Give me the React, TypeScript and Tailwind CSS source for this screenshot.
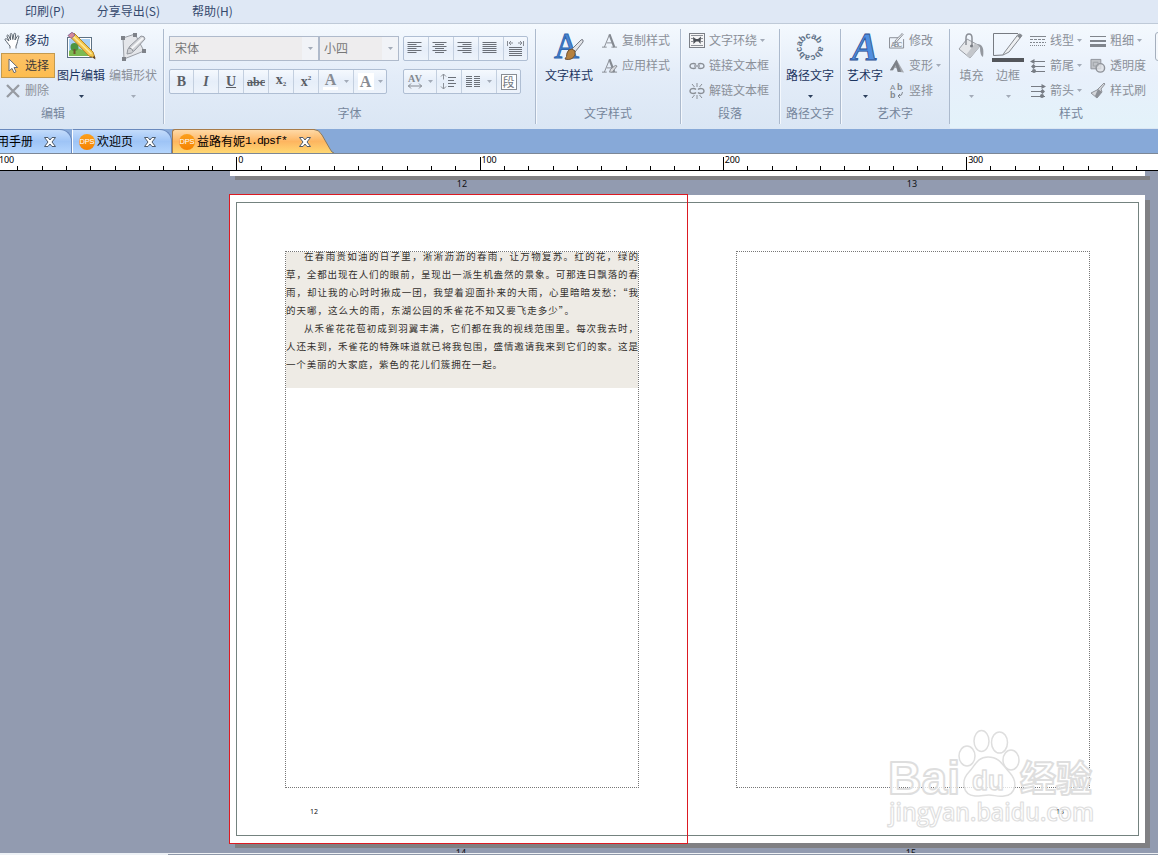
import type { ReactNode } from 'react';
import clsx from 'clsx';

const INK = '#6b7078';

function Caret({ dark = false }: { dark?: boolean }) {
  return (
    <svg width="5" height="3" viewBox="0 0 5 3" className="shrink-0">
      <path d="M0 0h5L2.5 3z" fill={dark ? '#2c3f5c' : '#a3abb8'} />
    </svg>
  );
}

function Group({ label, className, labelClass, children }: { label: string; className: string; labelClass?: string; children: ReactNode }) {
  return (
    <div className={clsx('flex flex-col shrink-0 h-[104px] pt-1', className)}>
      <div className="flex h-[75px]">{children}</div>
      <div className={clsx('h-[20px] leading-[20px] text-[#76869c]', labelClass ?? 'text-center')}>{label}</div>
    </div>
  );
}

function Divider() {
  return <div className="w-[2px] -mr-px shrink-0 h-[95px] mt-[5px] bg-[#acbacd] border-r border-[#f4f8fd]" />;
}

function BigButton({ icon, label, className, dark = false, caret = true }: { icon: ReactNode; label: string; className: string; dark?: boolean; caret?: boolean }) {
  return (
    <div className={clsx('flex flex-col items-center shrink-0', className)}>
      <div className="h-[38px] flex items-center justify-center">{icon}</div>
      <div className={clsx('h-[18px] leading-[18px] whitespace-nowrap', dark ? 'text-[#1c3560]' : 'text-[#8b9099]')}>{label}</div>
      {caret && <div className="mt-[11px] flex"><Caret dark={dark} /></div>}
    </div>
  );
}

function SmallButton({ icon, label, caret = false }: { icon: ReactNode; label: string; caret?: boolean }) {
  return (
    <div className="h-[25px] flex items-center gap-1 text-[#8b9099] whitespace-nowrap">
      <span className="w-4 h-4 flex items-center justify-center shrink-0">{icon}</span>
      <span className="pb-[2px]">{label}</span>
      {caret && <span className="-ml-px flex"><Caret /></span>}
    </div>
  );
}

/* ---------- icons ---------- */

function HandIcon() {
  return (
    <svg width="18" height="18" viewBox="0 0 18 18" fill="#fff" stroke="#5b6570" strokeWidth="1" strokeLinejoin="round">
      <path d="M6 16.500v-2.500C4.500 12.500 2.500 9.500 1.200 8c-.6-1 .6-1.800 1.500-1L5 9 3 4.200c-.4-1.200 1.100-1.700 1.600-.6L6.600 8 6.300 2.400c0-1.200 1.600-1.200 1.700 0L8.800 7.500 9.900 2c.3-1.200 1.800-.9 1.700.3L11 8l2.300-3.800c.7-1 1.900-.3 1.500.8-1.300 2.800-1.300 6.500-2.800 9v2.500" />
    </svg>
  );
}

function CursorIcon() {
  return (
    <svg width="16" height="16" viewBox="0 0 16 16">
      <path d="M4 1v12l3-2.600 2 4.300 2-1-2-4.200h3.700z" fill="#fff" stroke="#666c78" />
    </svg>
  );
}

function DeleteIcon() {
  return (
    <svg width="14" height="14" viewBox="0 0 14 14">
      <path d="M1 1l12 12M13 1L1 13" stroke="#979ba2" strokeWidth="2.300" />
    </svg>
  );
}

function PictureEditIcon() {
  return (
    <svg width="30" height="30" viewBox="0 0 30 30">
      <rect x="1.500" y="5.500" width="24" height="20" fill="#fff" stroke="#5d7183" />
      <rect x="3" y="7" width="21" height="17" fill="#a9d0f3" />
      <path d="M3 19q5-5 11-2t10-1v8H3z" fill="#7dba52" />
      <circle cx="8.500" cy="15" r="4" fill="#4b9540" />
      <path d="M7.500 17h2v5h-2z" fill="#71552c" />
      <path d="M4 4.500l4-3.500L27 20l2 6-6-2z" fill="#f3c74c" stroke="#b4852b" />
      <path d="M7 4L25.500 22" stroke="#fce99c" strokeWidth="1.500" />
      <path d="M2 3.500l4-3.200 3 2.700-4 3.500z" fill="#d78a9b" stroke="#8a6a95" />
      <path d="M26.500 25.500l3 2-1-4z" fill="#5f4429" />
    </svg>
  );
}

function ShapeEditIcon() {
  return (
    <svg width="28" height="30" viewBox="0 0 28 30">
      <path d="M4 6L16 2l9 17L5 27z" fill="#e4e6ea" stroke="#9a9ea5" />
      <path d="M22 4q4 0 4 3L16 18q-3 4-8 4 0-5 3-8z" fill="#cfd1d5" stroke="#93979e" />
      <path d="M24 6L12 17" stroke="#f5f6f8" strokeWidth="2" />
      <path d="M10 16q3 0 4 3" stroke="#868a91" fill="none" />
      <path d="M2 4h4v4H2zM14 1h4v4h-4zM23 17h4v4h-4zM3 25h4v4H3z" fill="#7e8289" />
    </svg>
  );
}

function AlignIcon({ kind }: { kind: 'left' | 'center' | 'right' | 'full' }) {
  return (
    <svg width="15" height="12" viewBox="0 0 15 12" stroke={INK} strokeWidth="1" className="-ml-[3px] -mt-px">
      {[0, 1, 2, 3, 4, 5].map((i) => {
        const w = kind === 'full' || i % 2 === 0 ? 14 : 9;
        const x = kind === 'right' ? 14.5 - w : kind === 'center' ? 7.5 - w / 2 : 0.5;
        return <path key={i} d={`M${x} ${i * 2 + 0.5}h${w}`} />;
      })}
    </svg>
  );
}

function DistributeIcon() {
  return (
    <svg width="17" height="17" viewBox="0 0 17 17" stroke={INK} fill="none">
      <path d="M.5 1v5M16.500 1v5M2 3h4M11 3h4M4 1L2 3l2 2M13 1l2 2-2 2" stroke="#868b93" />
      <path d="M2 7.500h13M2 9.500h13M2 11.500h13M2 13.500h13M2 15.500h13" />
    </svg>
  );
}

function KerningIcon() {
  return (
    <svg width="18" height="17" viewBox="0 0 18 17" className="overflow-visible">
      <text x="1" y="8.500" fontSize="10" fontWeight="bold" fontFamily="Liberation Serif" textLength="14" fill="#83888f">AV</text>
      <path d="M1 13h14M4 10.500L1.500 13 4 15.500M12 10.500l2.500 2.500-2.500 2.500" stroke="#858a92" fill="none" />
    </svg>
  );
}

function LineSpacingIcon() {
  return (
    <svg width="17" height="17" viewBox="0 0 17 17" stroke={INK} fill="none" className="-ml-[2px]">
      <path d="M3.500 1v5.500M1 3.500L3.500 1 6 3.500M3.500 10v6M1 13.500L3.500 16 6 13.500" stroke="#8c9199" />
      <path d="M8 4.500h8M8 7.500h6M8 10.500h8M8 13.500h6" />
    </svg>
  );
}

function ColumnsIcon() {
  return (
    <svg width="14" height="12" viewBox="0 0 14 12" stroke={INK}>
      {[0, 2, 4, 6, 8, 10].map((y) => (
        <path key={y} d={`M0 ${y + 0.5}h6M8 ${y + 0.5}h6`} />
      ))}
    </svg>
  );
}

function TextStyleIcon() {
  return (
    <svg width="32" height="32" viewBox="0 0 32 32" className="overflow-visible">
      <text x="1" y="27" fontSize="36" fontFamily="Liberation Serif" fill="#4b86d2" stroke="#2f66b0" strokeWidth="1" textLength="25" lengthAdjust="spacingAndGlyphs">A</text>
      <path d="M30 9q-1-1-2 0l-9 9 3 3 8-10z" fill="#e2e4e8" stroke="#777b84" />
      <path d="M22 20l-3-2q-4 0-5 4 0 4-2 6 7 2 10-4z" fill="#b5823f" stroke="#6f5234" />
    </svg>
  );
}

function ArtTextIcon() {
  return (
    <svg width="32" height="32" viewBox="0 0 32 32" className="overflow-visible">
      <text x="3" y="29" fontSize="40" fontWeight="bold" fontStyle="italic" fontFamily="Liberation Serif" fill="#4f8ee0" stroke="#2d4f8f" strokeWidth=".8" textLength="26" lengthAdjust="spacingAndGlyphs">A</text>
    </svg>
  );
}

function CopyStyleIcon({ brush = false }: { brush?: boolean }) {
  return (
    <svg width="17" height="16" viewBox="0 0 17 16" fill="none" stroke="#858a91">
      <path d="M0 14.500h5M10 14.500h6M2.500 14.500L8 1M5 10h6" />
      <path d="M8 1l5 13.500" strokeWidth="2.300" />
      {brush && <path d="M16 8l-5 6.500H8l1-3 5-4z" fill="#d9dbdf" />}
    </svg>
  );
}

function WrapIcon() {
  return (
    <svg width="16" height="15" viewBox="0 0 16 15">
      <rect x=".5" y=".5" width="15" height="14" fill="#f5f5f6" stroke="#7b7f86" />
      <path d="M2 2.500h12M2 12.500h12M2 5.500h2M2 8.500h2M12 5.500h2M12 8.500h2" stroke="#8d9198" />
      <path d="M4 4l3 2h2l3-2.500L11.500 11l-2-2.500H7L4.500 11z" fill="#4c5057" />
    </svg>
  );
}

function LinkIcon({ broken = false }: { broken?: boolean }) {
  return (
    <svg width="16" height="16" viewBox="0 0 16 16" fill="none" stroke="#8a8f96" strokeWidth="1.300">
      <path d="M7 6.500C5.500 5 1 5 1 8s4.500 3 6 1.500M9 6.500C10.500 5 15 5 15 8s-4.500 3-6 1.500" />
      {broken ? <path d="M8 0v4M8 12v4M3 1l2.500 3M13 1l-2.500 3M3 15l2.500-3M13 15l-2.500-3" strokeWidth="1" /> : <path d="M5 8h6" />}
    </svg>
  );
}

function PathTextIcon() {
  const letters = 'abcabcabcab'.split('');
  return (
    <svg width="32" height="32" viewBox="0 0 32 32" className="overflow-visible">
      {letters.map((ch, i) => (
        <text key={i} x="16" y="7.500" textAnchor="middle" fontSize="9" fontWeight="bold" fontFamily="Liberation Sans" fill="#5d7086" transform={`rotate(${i * 31 + 102} 16 16)`}>{ch}</text>
      ))}
    </svg>
  );
}

function ModifyIcon() {
  return (
    <svg width="17" height="16" viewBox="0 0 17 16" fill="none" stroke="#858a91">
      <path d="M11 4.500H.5v11h15V6" />
      <text x="2" y="14" fontSize="7" stroke="none" fill="#777c84" fontFamily="Liberation Sans" textLength="12">ABC</text>
      <path d="M15 1L8 9l-2 1 1-3 7-7z" fill="#eceef0" />
    </svg>
  );
}

function TransformIcon() {
  return (
    <svg width="17" height="16" viewBox="0 0 17 16">
      <path d="M8 1L1 12.500h3.500L6 10h2l1 4 7 1z" fill="#a7abb1" />
      <path d="M8 1L1 12.500h3L7 7l2.500 7.500L13 14z" fill="#7d8188" />
    </svg>
  );
}

function VerticalTextIcon() {
  return (
    <svg width="16" height="17" viewBox="0 0 16 17" fontFamily="Liberation Sans" fill="#83888f" className="overflow-visible">
      <text x="1" y="7.500" fontSize="8">A</text>
      <text x="8" y="7.500" fontSize="9" fontWeight="bold">b</text>
      <text x="1" y="16" fontSize="9" fontWeight="bold">b</text>
      <path d="M13.500 10q0 4-4 4M11 12l-2 2 2 2" fill="none" stroke="#83888f" />
    </svg>
  );
}

function FillIcon() {
  return (
    <svg width="27" height="28" viewBox="0 0 27 28">
      <path d="M9 6L22 13 12 25 1 16z" fill="#e5e7ea" stroke="#999da4" />
      <path d="M22 13L12 25l-4-3L17 10.500z" fill="#c3c6cb" />
      <path d="M19 11q8 0 6 13-3-1-3-10z" fill="#94989f" />
      <path d="M8 12V5q0-4 3-4t3 4v8" fill="none" stroke="#8a8e95" strokeWidth="1.500" />
      <circle cx="13.500" cy="13" r="1.500" fill="#777b82" />
    </svg>
  );
}

function BorderIcon() {
  return (
    <svg width="32" height="30" viewBox="0 0 32 30">
      <path d="M26 1.500H1.500v22L11 23" fill="none" stroke="#777b82" />
      <path d="M12 21L26 2.500q2-1.500 4 1L17 20l-6 3z" fill="#eef0f2" stroke="#85898f" />
      <path d="M25 4l3 2.500 2-3-2-1.500z" fill="#85898f" />
      <rect y="26" width="32" height="4" fill="#53565b" />
    </svg>
  );
}

function DashIcon() {
  return (
    <svg width="16" height="12" viewBox="0 0 16 12" stroke="#83888f">
      <path d="M0 1.500h16" />
      <path d="M0 4.500h16" strokeDasharray="3 1" />
      <path d="M0 7.500h16" strokeDasharray="2 1" />
      <path d="M0 10.500h16" strokeDasharray="1 1" />
    </svg>
  );
}

function ArrowIcon({ flip = false }: { flip?: boolean }) {
  return (
    <svg width="16" height="14" viewBox="0 0 16 14" stroke="#777c84" fill="#777c84" className={flip ? '-scale-x-100' : ''}>
      <path d="M1 2.500h14M3 7.500h12M1 12.500h14" />
      <path d="M4.500 0v5L0 2.500zM3.500 5L6 7.500 3.500 10 1 7.500z" stroke="none" />
      <circle cx="4" cy="12" r="2" stroke="none" />
    </svg>
  );
}

function WeightIcon() {
  return (
    <svg width="16" height="12" viewBox="0 0 16 12" fill="#80858c">
      <path d="M0 1h16v1H0zM0 5h16v2H0zM0 9h16v3H0z" />
    </svg>
  );
}

function OpacityIcon() {
  return (
    <svg width="17" height="16" viewBox="0 0 17 16">
      <path d="M1 1h10.500v10H1z" fill="#c0c3c8" stroke="#8f939a" />
      <circle cx="11" cy="10" r="4.500" fill="#dfe1e5" fillOpacity=".8" stroke="#8f939a" strokeWidth="1.500" />
      <path d="M3.500 4h5v4h-5z" fill="none" stroke="#9ea2a8" />
    </svg>
  );
}

function PainterIcon() {
  return (
    <svg width="16" height="16" viewBox="0 0 16 16">
      <path d="M15 1l-4 5 1 3-5 6-6-5 6-3 2-2 5-5z" fill="#d4d6da" stroke="#90949b" />
      <path d="M8 6l4 3-5 6-2-2z" fill="#8c9097" />
    </svg>
  );
}

function CloseIcon() {
  return (
    <svg width="12" height="10" viewBox="0 0 12 10">
      <path d="M.5.5h3.500L6 3 8 .5h3.500L8 5l3.500 4.500H8L6 7 4 9.500H.5L4 5z" fill="#fff" stroke="#4d5a6b" />
    </svg>
  );
}

function DpsIcon() {
  return (
    <span className="size-[16px] rounded-full bg-linear-to-b from-[#fba01c] to-[#f58200] flex items-center justify-center text-[7.500px] tracking-[-0.200px] leading-none text-white font-['Liberation_Sans'] shrink-0">DPS</span>
  );
}

/* ---------- ribbon ---------- */

const cell = 'h-full flex items-center justify-center border-r border-[#c3cfdf] last:border-r-0';
const box = 'flex h-[25px] border border-[#afbed3] rounded-[2px] bg-linear-to-b from-[#f5f9fe] via-[#e6eef9] to-[#edf3fb] shrink-0';

function FontGroup() {
  return (
    <Group label="字体" className="w-[371px]">
      <div className="flex flex-col pl-[5px] pt-2 w-full">
        <div className="flex">
          <div className="flex w-[150px] h-[25px] border border-[#afbacb] bg-[#eeedee] text-[#777]">
            <span className="flex-1 leading-[21px] pl-[5px]">宋体</span>
            <span className="w-4 flex items-center justify-center bg-[#f1f3f7]"><Caret /></span>
          </div>
          <div className="flex w-[80px] h-[25px] border border-[#afbacb] bg-[#eeedee] text-[#777]">
            <span className="flex-1 leading-[21px] pl-[4px]">小四</span>
            <span className="w-4 flex items-center justify-center bg-[#f1f3f7]"><Caret /></span>
          </div>
          <div className={clsx(box, 'w-[125px] ml-1')}>
            <span className={clsx(cell, 'w-[25px]')}><AlignIcon kind="left" /></span>
            <span className={clsx(cell, 'w-[25px]')}><AlignIcon kind="center" /></span>
            <span className={clsx(cell, 'w-[25px]')}><AlignIcon kind="right" /></span>
            <span className={clsx(cell, 'w-[25px]')}><AlignIcon kind="full" /></span>
            <span className={clsx(cell, 'flex-1')}><DistributeIcon /></span>
          </div>
        </div>
        <div className="flex mt-2">
          <div className={clsx(box, "w-[218px] font-['Liberation_Serif'] font-bold text-[14px] text-[#5a5e66]")}>
            <span className={clsx(cell, 'w-[24px]')}>B</span>
            <span className={clsx(cell, 'w-[25px] italic')}>I</span>
            <span className={clsx(cell, 'w-[25px] underline')}>U</span>
            <span className={clsx(cell, 'w-[25px] text-[12px] line-through')}>abc</span>
            <span className={clsx(cell, 'w-[25px]')}><span className="-mt-1">x</span><span className="text-[7px] mt-1.5">2</span></span>
            <span className={clsx(cell, 'w-[25px]')}><span>x</span><span className="text-[7px] mb-1.5">2</span></span>
            <span className={clsx(cell, 'w-[35px] gap-1.5 text-[16px] text-[#888c93]')}>
              <span className="w-[15px] h-[17px] leading-[14px] text-center border-b-[3px] border-white">A</span><Caret />
            </span>
            <span className={clsx(cell, 'flex-1 gap-1 text-[16px] text-[#888c93]')}>
              <span className="w-[16px] h-[17px] leading-[17px] text-center bg-white">A</span><Caret />
            </span>
          </div>
          <div className={clsx(box, 'w-[118px] ml-4')}>
            <span className={clsx(cell, 'w-[33px] gap-[3px]')}><KerningIcon /><Caret /></span>
            <span className={clsx(cell, 'w-[25px]')}><LineSpacingIcon /></span>
            <span className={clsx(cell, 'w-[35px] gap-[7px]')}><ColumnsIcon /><Caret /></span>
            <span className={clsx(cell, 'flex-1')}>
              <span className="size-[16px] border border-[#888d94] bg-white text-[12px] leading-[13px] text-[#71767d] flex justify-center">段</span>
            </span>
          </div>
        </div>
      </div>
    </Group>
  );
}

function Ribbon() {
  return (
    <div className="flex h-[106px] border-t border-[#bfcad8] bg-linear-to-b from-[#f4f9fe] via-[#e3ecf8] to-[#dae6f4] overflow-hidden">
      <Group label="编辑" className="w-[163px]" labelClass="pl-[41px]">
        <div className="w-[55px] shrink-0 text-[#1c3560]">
          <div className="h-[25px] flex items-center pl-1 gap-[3px]"><HandIcon /><span className="pb-[2px]">移动</span></div>
          <div className="h-[25px] w-[54px] ml-px flex items-center pl-[3px] gap-1 border border-[#c39a4f] bg-linear-to-b from-[#fcc268] to-[#fdbd4f] text-[#3f3b39]"><CursorIcon /><span className="pb-[2px]">选择</span></div>
          <div className="h-[25px] flex items-center pl-[6px] gap-[5px] text-[#8b9099]"><DeleteIcon /><span className="pb-[2px]">删除</span></div>
        </div>
        <BigButton className="w-[52px]" icon={<PictureEditIcon />} label="图片编辑" dark />
        <BigButton className="w-[52px]" icon={<ShapeEditIcon />} label="编辑形状" />
      </Group>
      <Divider />
      <FontGroup />
      <Divider />
      <Group label="文字样式" className="w-[144px]">
        <BigButton className="w-[66px]" icon={<TextStyleIcon />} label="文字样式" dark caret={false} />
        <div>
          <SmallButton icon={<CopyStyleIcon />} label="复制样式" />
          <SmallButton icon={<CopyStyleIcon brush />} label="应用样式" />
        </div>
      </Group>
      <Divider />
      <Group label="段落" className="w-[98px]">
        <div className="pl-2">
          <SmallButton icon={<WrapIcon />} label="文字环绕" caret />
          <SmallButton icon={<LinkIcon />} label="链接文本框" />
          <SmallButton icon={<LinkIcon broken />} label="解链文本框" />
        </div>
      </Group>
      <Divider />
      <Group label="路径文字" className="w-[60px]">
        <BigButton className="w-[60px]" icon={<PathTextIcon />} label="路径文字" dark />
      </Group>
      <Divider />
      <Group label="艺术字" className="w-[108px]">
        <BigButton className="w-12" icon={<ArtTextIcon />} label="艺术字" dark />
        <div>
          <SmallButton icon={<ModifyIcon />} label="修改" />
          <SmallButton icon={<TransformIcon />} label="变形" caret />
          <SmallButton icon={<VerticalTextIcon />} label="竖排" />
        </div>
      </Group>
      <Divider />
      <Group label="样式" className="w-[208px] bg-linear-to-b from-[#f4f9fe] via-[#e8f0fb] to-[#e3f2fa]" labelClass="pl-[109px]">
        <BigButton className="w-[43px]" icon={<FillIcon />} label="填充" />
        <BigButton className="w-[30px]" icon={<BorderIcon />} label="边框" />
        <div className="w-[60px] pl-[7px] shrink-0">
          <SmallButton icon={<DashIcon />} label="线型" caret />
          <SmallButton icon={<ArrowIcon />} label="箭尾" caret />
          <SmallButton icon={<ArrowIcon flip />} label="箭头" caret />
        </div>
        <div className="pl-[7px] shrink-0">
          <SmallButton icon={<WeightIcon />} label="粗细" caret />
          <SmallButton icon={<OpacityIcon />} label="透明度" />
          <SmallButton icon={<PainterIcon />} label="样式刷" />
        </div>
        <div className="w-4 h-[29px] ml-[9px] mt-1 shrink-0 border border-[#a5afbd] rounded-[3px] bg-[#f5f8fc]" />
      </Group>
    </div>
  );
}

/* ---------- document tabs ---------- */

function TabBar() {
  const idle = 'h-[24px] flex items-center rounded-tr-[12px] border-t border-r border-[#6989bd] bg-linear-to-b from-[#c4dcfb] via-[#9ec4f6] to-[#b4d5fd]';
  return (
    <div className="flex items-end h-[25px] bg-[#87a9d8] border-b border-[#7c8796] text-[12px] text-black whitespace-nowrap">
      <div className={clsx(idle, 'w-[72px]')}>
        <span className="-ml-[3px] pb-px">用手册</span>
        <span className="ml-[11px]"><CloseIcon /></span>
      </div>
      <div className={clsx(idle, 'w-[100px] pl-[6px] border-l border-l-white')}>
        <DpsIcon />
        <span className="ml-[2px] pb-px">欢迎页</span>
        <span className="ml-[11px]"><CloseIcon /></span>
      </div>
      <div className="flex h-[24px]">
        <div className="flex items-center w-[143px] pl-[6px] border-t border-l border-[#a87b48] rounded-tl-[3px] bg-linear-to-b from-[#fed9a6] via-[#fdb560] to-[#ffd873]">
          <DpsIcon />
          <span className="ml-[2px] pb-px flex">益路有妮<span className="font-['Liberation_Mono'] text-[11.500px] tracking-[-0.900px] leading-[18px]">1.dpsf*</span></span>
          <span className="ml-[12px]"><CloseIcon /></span>
        </div>
        <svg width="20" height="24" viewBox="0 0 20 24" className="-ml-px">
          <defs>
            <linearGradient id="tabfill" x1="0" y1="0" x2="0" y2="1">
              <stop offset="0" stopColor="#fed9a6" />
              <stop offset=".5" stopColor="#fdb560" />
              <stop offset="1" stopColor="#ffd873" />
            </linearGradient>
          </defs>
          <path d="M0 .5Q5 .5 8 6L16 20Q18 24 20 24H0z" fill="url(#tabfill)" />
          <path d="M0 .5Q5 .5 8 6L16 20Q18 24 20 24" fill="none" stroke="#8a795f" />
        </svg>
      </div>
    </div>
  );
}

/* ---------- ruler ---------- */

function Ruler() {
  const ticks = Array.from({ length: 49 }, (_, i) => i);
  return (
    <div className="h-[17px] bg-white border-b border-black overflow-hidden">
      <div className="flex items-end h-4 -ml-[7px]">
        {ticks.map((i) => {
          const major = i % 10 === 0;
          return (
            <div key={i} className={clsx('w-[24.330px] shrink-0 border-l border-black', major ? 'h-[13px]' : 'h-[4px]')}>
              {major && <div className={clsx("text-[9px] leading-[9px] -mt-[2px] font-['Noto_Sans'] tracking-[-0.200px] text-black", i === 0 ? 'pl-[5px]' : 'pl-px')}>{Math.abs(i - 10) * 10}</div>}
            </div>
          );
        })}
      </div>
    </div>
  );
}

/* ---------- canvas ---------- */

const lines = [
  { text: '在春雨贵如油的日子里，淅淅沥沥的春雨，让万物复苏。红的花，绿的', className: 'pl-[18px] [text-align-last:justify]' },
  { text: '草，全都出现在人们的眼前，呈现出一派生机盎然的景象。可那连日飘落的春', className: '[text-align-last:justify]' },
  { text: '雨，却让我的心时时揪成一团，我望着迎面扑来的大雨，心里暗暗发愁：“我', className: '[text-align-last:justify]' },
  { text: '的天哪，这么大的雨，东湖公园的禾雀花不知又要飞走多少”。', className: 'w-[288px] [text-align-last:justify]' },
  { text: '从禾雀花花苞初成到羽翼丰满，它们都在我的视线范围里。每次我去时，', className: 'pl-[18px] [text-align-last:justify]' },
  { text: '人还未到，禾雀花的特殊味道就已将我包围，盛情邀请我来到它们的家。这是', className: '[text-align-last:justify]' },
  { text: '一个美丽的大家庭，紫色的花儿们簇拥在一起。', className: 'w-[216px] [text-align-last:justify]' },
];

function Watermark() {
  return (
    <svg width="212" height="102" viewBox="0 0 212 102" className="absolute left-[657px] top-[533px] overflow-visible" fill="#fff" fillOpacity=".75" stroke="#dedede" strokeWidth="1.500" strokeLinejoin="round">
      <text x="1" y="66" fontSize="47" fontWeight="bold" fontFamily="Liberation Sans" textLength="72" lengthAdjust="spacingAndGlyphs" strokeWidth="2">Bai</text>
      <ellipse cx="80" cy="28" rx="8" ry="10" />
      <ellipse cx="94.500" cy="13" rx="7.500" ry="10.500" />
      <ellipse cx="112.500" cy="14.500" rx="8" ry="10.500" />
      <ellipse cx="124" cy="32" rx="8" ry="10" />
      <path d="M101 29c-11 0-13 9-19 15-8 8-7 23 6 24 7 0 9-1 14-1s9 2 15 1c12-1 14-14 6-23-7-7-10-16-22-16z" />
      <text x="85" y="62" fontSize="28" fontWeight="bold" fontFamily="Liberation Sans" textLength="32" lengthAdjust="spacingAndGlyphs">du</text>
      <text x="133" y="64" fontSize="36" fontWeight="bold" fontFamily="Noto Sans CJK SC" strokeWidth="2">经验</text>
      <text x="2" y="93" fontSize="25" fontWeight="600" fontFamily="Open Sans" textLength="205" lengthAdjust="spacingAndGlyphs" strokeWidth="1.200">jingyan.baidu.com</text>
    </svg>
  );
}

function Canvas() {
  return (
    <div className="h-[684px] bg-[#929bb0] overflow-hidden font-['Noto_Sans'] text-[9px] text-[#101010]">
      <div className="ml-[230px] w-[915px] h-[5px] bg-white" />
      <div className="ml-[235px] w-[915px] h-[4px] bg-[#808083]" />
      <div className="ml-[237px] flex h-[15px] leading-[7px] text-center">
        <span className="w-[450px]">12</span>
        <span className="w-[450px]">13</span>
      </div>
      <div className="relative ml-[230px] w-[915px] h-[648px] p-[6px] pt-[7px] bg-white shadow-[5px_5px_0_#808083]">
        <div className="flex w-[903px] h-[634px] border border-[#74827f] pt-[48px] pl-[48px]">
          <div className="w-[354px] shrink-0">
            <div className="h-[537px] border border-dotted border-[#777]">
              <div className="h-[136px] bg-[#eeebe5] font-['Noto_Sans_CJK_SC',sans-serif] text-[9.500px] leading-[18px] text-[#33302d] whitespace-nowrap">
                <div className="relative -top-[5px]">
                  {lines.map((line) => (
                    <p key={line.text} className={line.className}>{line.text}</p>
                  ))}
                </div>
              </div>
            </div>
            <div className="mt-[18px] pl-[25px] text-[7px] leading-[12px]">12</div>
          </div>
          <div className="w-[354px] ml-[97px] shrink-0">
            <div className="h-[537px] border border-dotted border-[#777]" />
            <div className="mt-[18px] pr-[26px] text-right text-[7px] leading-[12px]">13</div>
          </div>
        </div>
        {/* active page outline */}
        <div className="absolute -left-px -top-px w-[459px] h-[650px] shadow-[inset_0_0_0_1px_#dc1a22]" />
        <Watermark />
      </div>
      <div className="ml-[236px] mt-[5px] flex h-[5px] leading-[9px] text-center overflow-hidden">
        <span className="w-[450px]">14</span>
        <span className="w-[450px]">15</span>
      </div>
      <div className="flex h-[3px]">
        <div className="w-[168px] bg-[#eef2f6]" />
        <div className="flex-1 border-t border-[#f0f2f5] bg-[#8d97a8]" />
      </div>
    </div>
  );
}

export default function App() {
  return (
    <div className="w-[1158px] h-[855px] flex flex-col overflow-hidden font-['Noto_Sans_CJK_SC',sans-serif] text-[12px]">
      <div className="flex items-center h-[23px] bg-[#dfe8f5] text-[#34496d] pl-[25px] pb-px gap-[32px]">
        <span>印刷(P)</span>
        <span>分享导出(S)</span>
        <span>帮助(H)</span>
      </div>
      <Ribbon />
      <TabBar />
      <Ruler />
      <Canvas />
    </div>
  );
}
